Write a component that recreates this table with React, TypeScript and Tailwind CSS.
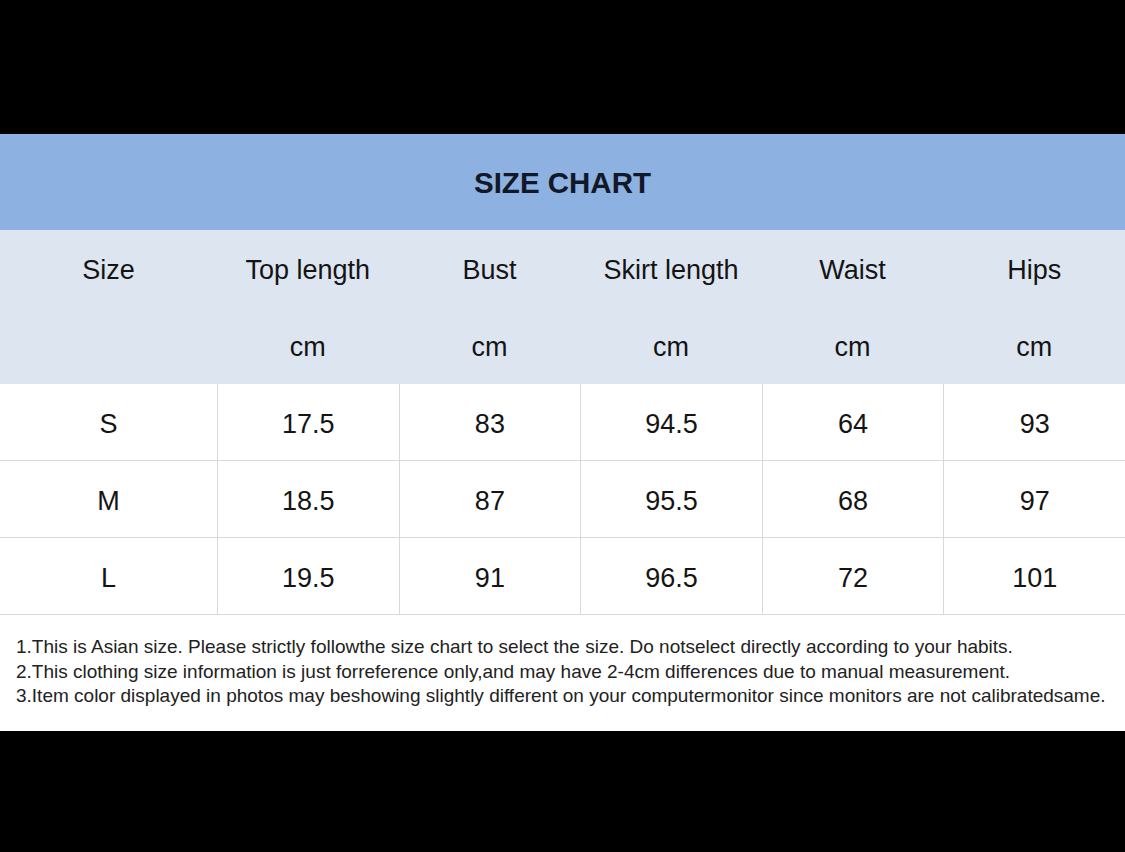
import React from "react";

const headers = ["Size", "Top length", "Bust", "Skirt length", "Waist", "Hips"];
const rows = [
  ["S", "17.5", "83", "94.5", "64", "93"],
  ["M", "18.5", "87", "95.5", "68", "97"],
  ["L", "19.5", "91", "96.5", "72", "101"],
];

export default function App() {
  return (
    <div
      className="w-[1125px] h-[852px] bg-black flex flex-col text-[#141414]"
      style={{ fontFamily: '"Liberation Sans", Arial, sans-serif' }}
    >
      <div className="h-[134px]" />
      <div className="h-[96px] bg-[#8db1e1] flex items-center justify-center">
        <span className="text-[29.5px] font-bold text-[#111827] pt-[2px]">SIZE CHART</span>
      </div>
      <div className="bg-[#dde5f1] grid grid-cols-[217px_repeat(5,1fr)]">
        {headers.map((h) => (
          <div key={h} className="h-[77px] flex items-center justify-center text-[27px] pt-[4px]">
            {h}
          </div>
        ))}
        {headers.map((h, i) => (
          <div key={h + "u"} className="h-[77px] flex items-center justify-center text-[27px] pt-[4px]">
            {i === 0 ? "" : "cm"}
          </div>
        ))}
      </div>
      <div className="bg-white">
        {rows.map((r) => (
          <div key={r[0]} className="grid grid-cols-[217px_repeat(5,1fr)] border-b border-[#d9d9d9]">
            {r.map((c, i) => (
              <div
                key={i}
                className={`h-[76px] flex items-center justify-center text-[27px] pt-[4px] ${i > 0 ? "border-l border-[#d9d9d9]" : ""}`}
              >
                {c}
              </div>
            ))}
          </div>
        ))}
      </div>
      <div className="h-[116px] bg-white pl-[16px] pt-[20px] text-[19px] leading-[24.5px] text-[#222]">
        <p>1.This is Asian size. Please strictly followthe size chart to select the size. Do notselect directly according to your habits.</p>
        <p>2.This clothing size information is just forreference only,and may have 2-4cm differences due to manual measurement.</p>
        <p>3.Item color displayed in photos may beshowing slightly different on your computermonitor since monitors are not calibratedsame.</p>
      </div>
    </div>
  );
}
